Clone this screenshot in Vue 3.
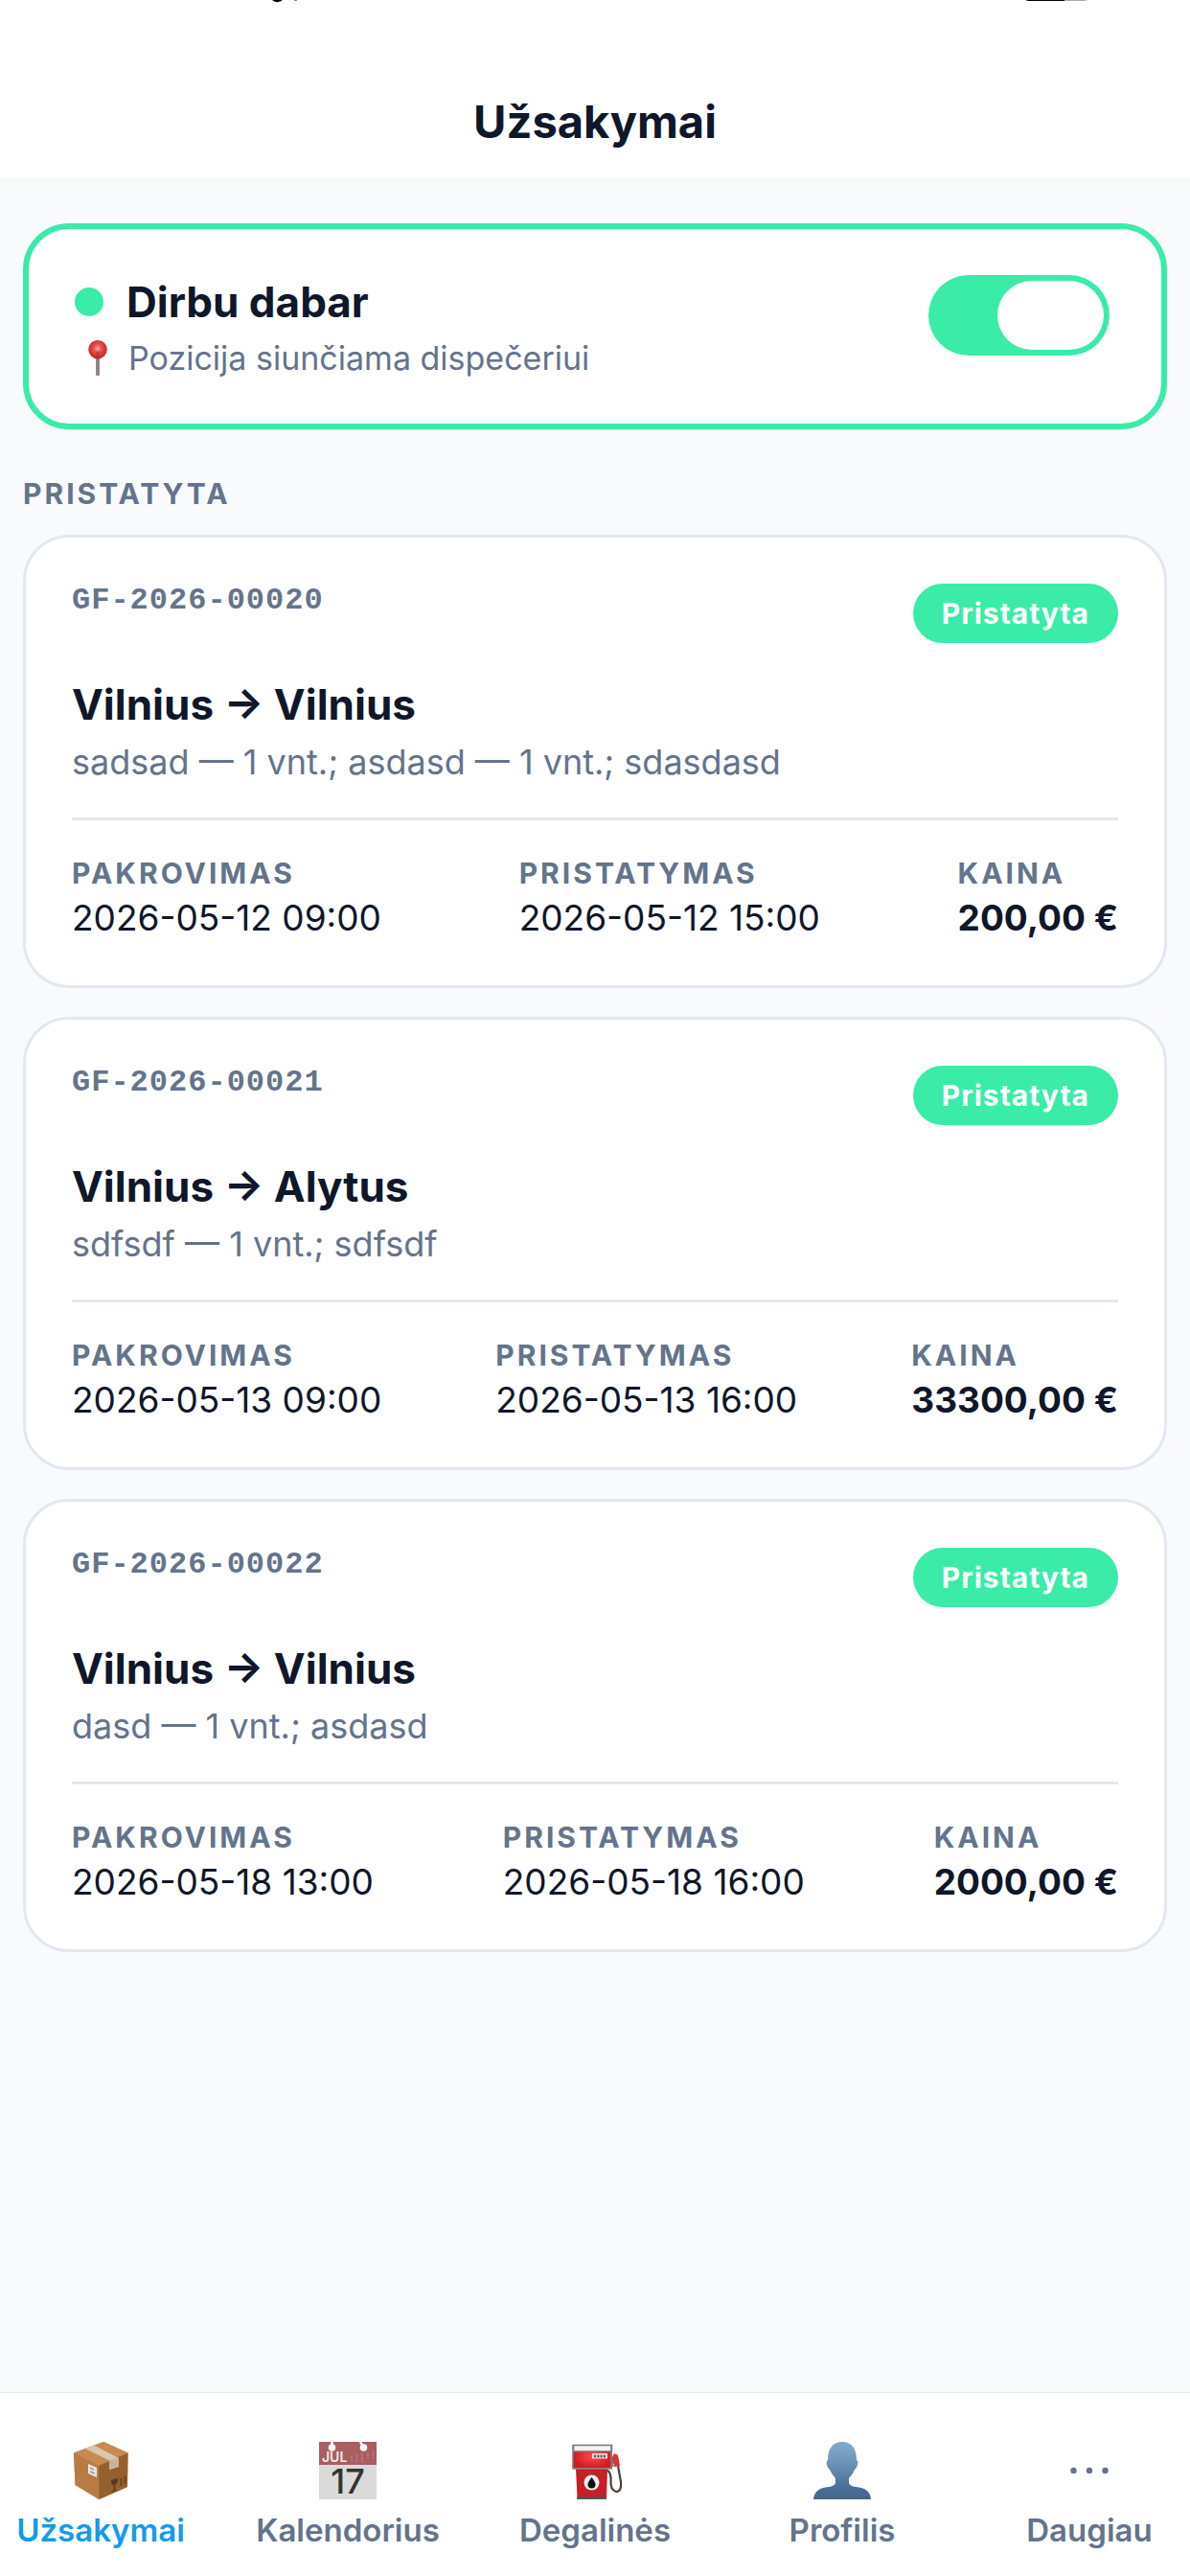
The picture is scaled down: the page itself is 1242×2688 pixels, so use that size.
<script setup>
import { ref } from 'vue'

const working = ref(true)

const orders = [
  { id: 'GF-2026-00020', status: 'Pristatyta', route: 'Vilnius → Vilnius', cargo: 'sadsad — 1 vnt.; asdasd — 1 vnt.; sdasdasd', pickup: '2026-05-12 09:00', delivery: '2026-05-12 15:00', price: '200,00 €' },
  { id: 'GF-2026-00021', status: 'Pristatyta', route: 'Vilnius → Alytus', cargo: 'sdfsdf — 1 vnt.; sdfsdf', pickup: '2026-05-13 09:00', delivery: '2026-05-13 16:00', price: '33300,00 €' },
  { id: 'GF-2026-00022', status: 'Pristatyta', route: 'Vilnius → Vilnius', cargo: 'dasd — 1 vnt.; asdasd', pickup: '2026-05-18 13:00', delivery: '2026-05-18 16:00', price: '2000,00 €' },
]
</script>

<template>
  <div class="app">
    <header class="header">
      <svg class="statusbar" viewBox="0 0 1242 3" aria-hidden="true">
        <path d="M284 0H295Q293 2 289 2.300Q286 2 284 0Z" fill="#000" />
        <rect x="307" width="3" height="1" fill="#888" />
        <path d="M1070 0H1111V1H1073Z" fill="#000" />
        <path d="M1111 0H1135L1132 1H1111Z" fill="#aaa" />
      </svg>
      <h1>Užsakymai</h1>
    </header>

    <main class="content">
      <section class="shift">
        <div>
          <label class="shift-title" for="working"><span class="dot"></span>Dirbu dabar</label>
          <p class="shift-note">
            <svg class="pin" viewBox="0 0 36 42" aria-hidden="true">
              <defs>
                <radialGradient id="pinHead" cx="50%" cy="45%" r="55%">
                  <stop offset="0" stop-color="#ffb9a8" />
                  <stop offset=".35" stop-color="#ec5650" />
                  <stop offset="1" stop-color="#c01f25" />
                </radialGradient>
              </defs>
              <rect x="16" y="18" width="4" height="22" rx="1" fill="#93837c" />
              <circle cx="18" cy="12" r="10" fill="url(#pinHead)" />
              <rect x="16" y="14" width="4" height="7" fill="#b5302f" opacity=".6" />
            </svg>
            Pozicija siunčiama dispečeriui
          </p>
        </div>
        <input id="working" v-model="working" class="switch" type="checkbox" role="switch" />
      </section>

      <h2 class="section-title">PRISTATYTA</h2>

      <div class="orders">
        <article v-for="order in orders" :key="order.id" class="order">
          <div class="order-top">
            <span class="order-id">{{ order.id }}</span>
            <span class="badge">{{ order.status }}</span>
          </div>
          <h3>{{ order.route }}</h3>
          <p class="cargo">{{ order.cargo }}</p>
          <dl class="facts">
            <div><dt>PAKROVIMAS</dt><dd>{{ order.pickup }}</dd></div>
            <div><dt>PRISTATYMAS</dt><dd>{{ order.delivery }}</dd></div>
            <div><dt>KAINA</dt><dd class="price">{{ order.price }}</dd></div>
          </dl>
        </article>
      </div>
    </main>

    <nav class="tabs">
      <div class="tabs-row">
        <a href="#orders" class="tab active" aria-current="page">
          <svg viewBox="0 0 60 60" aria-hidden="true">
            <path d="M2 11.500 33 0 58.500 11.500 58 47 28.500 60 3.500 45Z" fill="#b87942" />
            <path d="M2 11.500 33 0 58.500 11.500 28 25Z" fill="#c68a52" />
            <path d="M2 11.500 28 25V60L3.500 45Z" fill="#b97b45" />
            <path d="M28 25 58.500 11.500 58 47 28.500 60Z" fill="#94602f" />
            <path d="M14 7 23 3.500 49 17V26L39 29V19.500Z" fill="#dcc6ad" />
            <path d="M39 19.500 49 16.500V26L39 29Z" fill="#c9b399" />
            <path d="m17 23 9 4v10l-9-4Z" fill="#e9e7e4" />
            <path d="m19 27 4 2m-4 2 5 2" fill="none" stroke="#9c9c9c" stroke-width="1.500" />
            <path d="m41 40 7-2q0 6-3.500 7T41 40Z" fill="#59391d" />
            <path d="M44.500 45v6m-3 1 5-2M51.500 38v8m4-10v8" fill="none" stroke="#59391d" stroke-width="1.300" />
          </svg>
          Užsakymai
        </a>
        <a href="#calendar" class="tab">
          <svg viewBox="0 0 60 60" aria-hidden="true">
            <path d="M0 0H60V60H0Z" fill="#dadada" />
            <path d="M0 0H60V24H0Z" fill="#a95e60" />
            <path d="M13.500 0v6M43 0l3 5" stroke="#fff" stroke-width="2.500" />
            <circle cx="13.500" cy="6" r="3.800" fill="#fff" />
            <circle cx="46.500" cy="6" r="3.800" fill="#fff" />
            <path d="M34 15v6M39.500 14v7M45 12v9M51 12v6M56.500 10v8" stroke="#c99092" stroke-width="1.500" stroke-dasharray="1 1" />
            <text x="3" y="20.500" font-family="Inter, sans-serif" font-size="14" fill="#f4e9e9">JUL</text>
            <text x="30" y="54" text-anchor="middle" font-family="Inter, sans-serif" font-size="36" font-weight="500" fill="#333">17</text>
          </svg>
          Kalendorius
        </a>
        <a href="#fuel" class="tab">
          <svg viewBox="0 0 60 60" aria-hidden="true">
            <defs>
              <radialGradient id="pumpRed">
                <stop offset="0" stop-color="#ff4a4c" />
                <stop offset="1" stop-color="#d01a23" />
              </radialGradient>
            </defs>
            <path d="M43 30q4 2 3.500 11t5.500 11q6 0 5-10l-3-17" fill="none" stroke="#48413c" stroke-width="2.200" />
            <path d="m50 12 4 2 2 11-5 1-4-8Z" fill="#d93439" />
            <path d="m49 19-1 6h3" fill="none" stroke="#777" stroke-width="1.500" />
            <path d="M10 28H43L42 58H11.500Z" fill="#c51f28" />
            <path d="M7 3H48V27.500H7Z" fill="url(#pumpRed)" />
            <path d="M7.500 3.500H47.500V10H7.500Z" fill="#f2f2f2" stroke="#777" stroke-width="1.500" />
            <path d="M7 3V28H47V4" fill="none" stroke="#877c7c" stroke-width="1.600" />
            <path d="M27 12H43V17.500H27Z" fill="#e5d9d7" />
            <path d="M29 15H42" stroke="#6c4545" stroke-width="2.500" stroke-dasharray="2 1.300" />
            <circle cx="26.500" cy="42.500" r="8" fill="#eee" />
            <path d="M26.500 37q4 5 4 7.500a4 4 0 0 1-8 0q0-2.500 4-7.500Z" fill="#111" />
            <path d="M11 57.500H42V60H11Z" fill="#555" />
          </svg>
          Degalinės
        </a>
        <a href="#profile" class="tab">
          <svg viewBox="0 0 60 60" aria-hidden="true">
            <defs>
              <linearGradient id="person" x2="0" y2="1">
                <stop offset="0" stop-color="#80aacb" />
                <stop offset=".3" stop-color="#7299bb" />
                <stop offset=".75" stop-color="#4b729a" />
                <stop offset="1" stop-color="#44658a" />
              </linearGradient>
            </defs>
            <path d="M30 0C39 0 45 6 45 19Q47 20 46 24Q45 28 43 29Q41 34 37 38V43Q38 46 44 47Q59 48 60 60H0Q1 48 16 47Q22 46 23 43V38Q19 34 17 29Q15 28 14 24Q13 20 15 19C15 6 21 0 30 0Z" fill="url(#person)" />
          </svg>
          Profilis
        </a>
        <a href="#more" class="tab">
          <svg viewBox="0 0 60 60" aria-hidden="true">
            <g fill="#64748b">
              <circle cx="13.500" cy="30" r="3.200" />
              <circle cx="30" cy="30" r="3.200" />
              <circle cx="46.500" cy="30" r="3.200" />
            </g>
          </svg>
          Daugiau
        </a>
      </div>
    </nav>
  </div>
</template>

<style>
body {
  margin: 0;
  background: #f8fafc;
}
</style>

<style scoped>
.app {
  display: flex;
  flex-direction: column;
  min-height: 100vh;
  background: #f8fafc;
  color: #0f172a;
  font-family: Inter, "Liberation Sans", sans-serif;
}
h1, h2, h3, p, dl, dd {
  margin: 0;
}
.header {
  position: relative;
  padding: 98px 24px 29px;
  background: #fff;
  text-align: center;
}
.statusbar {
  position: absolute;
  top: 0;
  left: 0;
  width: 100%;
}
h1 {
  font-size: 47px;
  line-height: 58px;
  font-weight: 700;
}
.content {
  flex: 1;
  padding: 48px 24px;
}
.shift {
  display: flex;
  justify-content: space-between;
  align-items: flex-start;
  padding: 48px 54px 48px 48px;
  border: 6px solid #3aeca8;
  border-radius: 48px;
  background: #fff;
}
.shift-title {
  display: flex;
  align-items: center;
  gap: 24px;
  font-size: 44px;
  line-height: 56px;
  font-weight: 700;
}
.dot {
  width: 30px;
  height: 30px;
  border-radius: 50%;
  background: #3aeca8;
}
.shift-note {
  display: flex;
  align-items: center;
  gap: 14px;
  margin-top: 10px;
  padding-left: 6px;
  color: #64748b;
  font-size: 34px;
  line-height: 41px;
}
.pin {
  width: 36px;
  height: 41px;
}
.switch {
  appearance: none;
  display: flex;
  justify-content: flex-end;
  box-sizing: border-box;
  width: 189px;
  height: 84px;
  margin: 0;
  padding: 6px;
  border-radius: 42px;
  background: #cbd5e1;
}
.switch:checked {
  background: #3aeca8;
}
.switch::before {
  content: "";
  width: 111px;
  border-radius: 36px;
  background: #fff;
}
.switch:not(:checked) {
  justify-content: flex-start;
}
.section-title {
  margin: 48px 0 24px;
  color: #64748b;
  font-size: 30px;
  line-height: 38px;
  font-weight: 700;
  letter-spacing: 3px;
}
.orders {
  display: grid;
  gap: 30px;
}
.order {
  padding: 48px;
  border: 3px solid #e2e8f0;
  border-radius: 48px;
  background: #fff;
}
.order-top {
  display: flex;
  justify-content: space-between;
  align-items: flex-start;
}
.order-id {
  color: #64748b;
  font-family: "Liberation Mono", monospace;
  font-size: 32px;
  line-height: 36px;
  font-weight: 700;
  letter-spacing: 1px;
}
.badge {
  padding: 12px 30px;
  border-radius: 31px;
  background: #3aeca8;
  color: #fff;
  font-size: 30px;
  line-height: 38px;
  font-weight: 700;
  letter-spacing: 1px;
}
h3 {
  margin-top: 36px;
  font-size: 44px;
  line-height: 56px;
  font-weight: 700;
}
.cargo {
  margin-top: 10px;
  color: #64748b;
  font-size: 36px;
  line-height: 44px;
}
.facts {
  display: flex;
  justify-content: space-between;
  margin-top: 36px;
  padding-top: 36px;
  border-top: 3px solid #e2e8f0;
}
dt {
  color: #64748b;
  font-size: 30px;
  line-height: 38px;
  font-weight: 700;
  letter-spacing: 3px;
}
dd {
  margin-top: 6px;
  font-size: 37px;
  line-height: 44px;
}
.price {
  font-weight: 700;
}
.tabs {
  overflow: hidden;
  border-top: 1px solid #e2e8f0;
  background: #fff;
}
.tabs-row {
  display: grid;
  grid-template-columns: repeat(5, 1fr);
  margin: 0 -24px;
  padding: 51px 0 28px;
}
.tab {
  display: flex;
  flex-direction: column;
  align-items: center;
  gap: 12px;
  color: #64748b;
  font-size: 33px;
  line-height: 40px;
  font-weight: 600;
  text-decoration: none;
}
.tab svg {
  width: 60px;
  height: 60px;
  overflow: visible;
}
.active {
  color: #149bea;
}
</style>
